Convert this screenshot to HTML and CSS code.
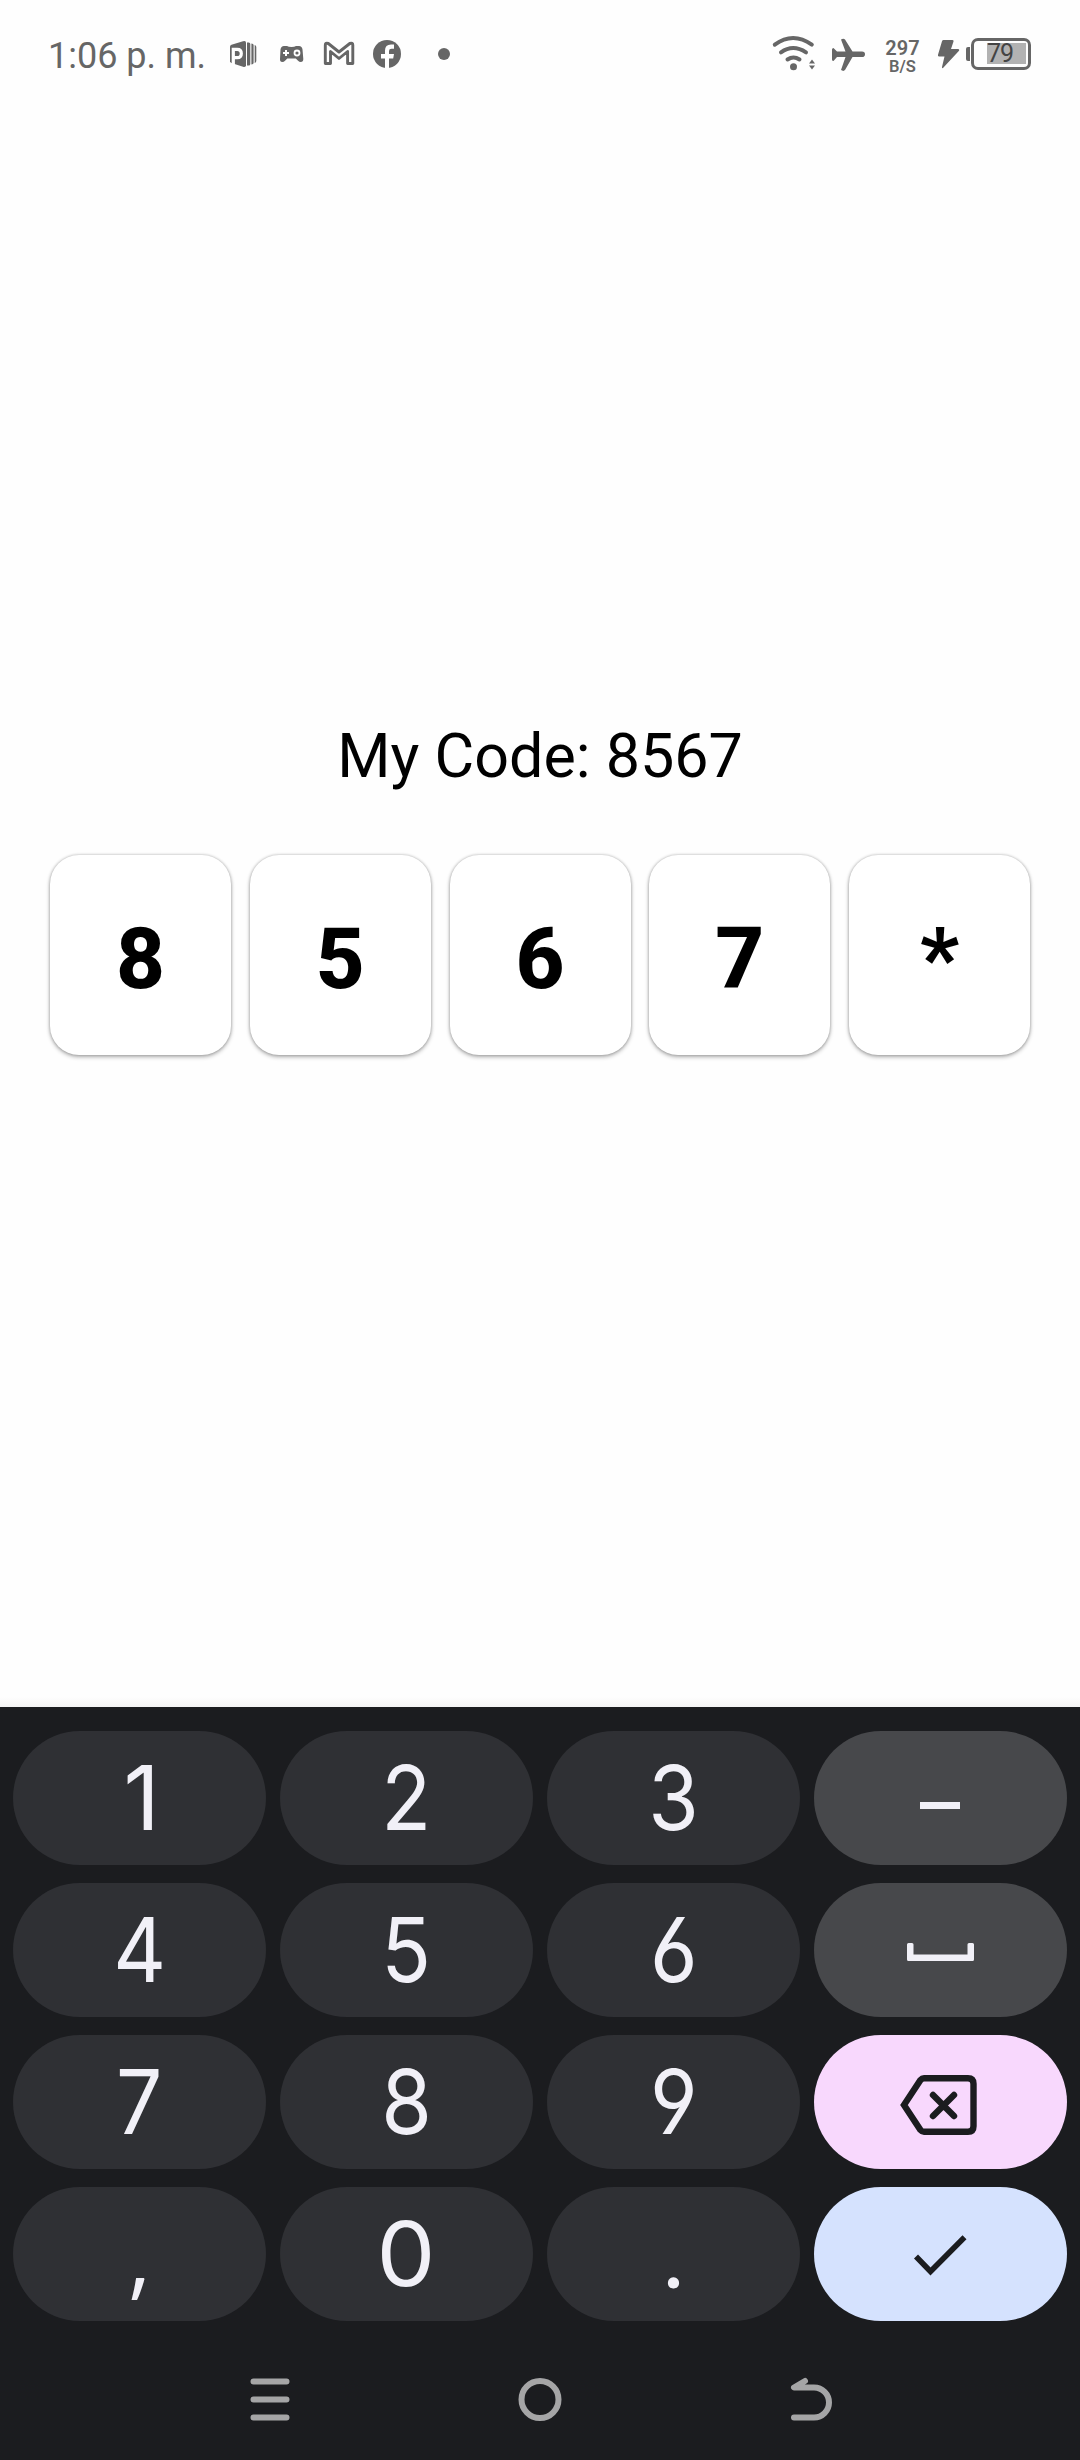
FILE: index.html
```
<!DOCTYPE html>
<html lang="es">
<head>
<meta charset="utf-8">
<title>My Code</title>
<link rel="stylesheet" href="styles.css">
</head>
<body>
<div class="screen">
  <header class="status">
    <div class="status-left">
      <span class="time">1:06 p. m.</span>
      <svg width="28" height="44" viewBox="229 32 28 44"><path d="M230 46.500q0-1.200 1.500-1.700L243 41.200q3-.8 3 1.300v23q0 2-3 1.300L231.500 63q-1.500-.5-1.500-1.700z" fill="#666"/><path d="M233.300 66V49.300h4q4 0 4 4.200t-4 4.200h-4" fill="none" stroke="#fff" stroke-width="3.200"/><path d="M247 42.500h1.800q1.500 0 1.500 1.500v20q0 1.500-1.500 1.500H247zM251.400 43.500q2.200.2 2.200 1.500v18q0 1.300-2.200 1.500zM254.700 45q1.600.3 1.600 2v14q0 1.700-1.600 2z" fill="#666"/></svg>
      <svg width="24" height="44" viewBox="280 32 24 44"><path d="M284 46h3q1.500 1 4.500 1t4.500-1h3q3 0 3.500 3.500l.8 9.500q0 3-2.500 3-1.500 0-3-1.500l-2-2h-8.500l-2 2q-1.500 1.500-3 1.500-2.500 0-2.300-3l.5-9.500q.5-3.500 3.500-3.500z" fill="#666"/><path d="M286 50v6M283 53h6" stroke="#fff" stroke-width="2"/><circle cx="297" cy="53" r="2.500" fill="none" stroke="#fff" stroke-width="1.800"/></svg>
      <svg width="32" height="44" viewBox="323 32 32 44"><path d="M325.300 63.500V45q0-2.500 3-1.500L339 52l10.800-8.500q3-1 3 1.500v18.500h-5.200V51.500L339 58.500l-8.500-7v12z" fill="none" stroke="#666" stroke-width="2.900" stroke-linejoin="round"/></svg>
      <svg width="28" height="44" viewBox="373 32 28 44"><circle cx="387" cy="54" r="14" fill="#666"/><path d="M385 68.300V58.500h-4V54h4v-3.500q0-6 6-6h3v4.200h-2.500q-2.500 0-2.500 2.300v3h5l-.8 4.500H389v9.800z" fill="#fff"/></svg>
      <svg width="12" height="44" viewBox="438 32 12 44"><circle cx="444" cy="54" r="6" fill="#666"/></svg>
    </div>
    <div class="status-right">
      <svg width="43" height="44" viewBox="773 32 43 44"><g fill="none" stroke="#666" stroke-width="4" stroke-linecap="round"><path d="M774.800 44.700q18.200-13.500 37 0M781 52.300q12-8.500 25 0M787.500 59.500q6-4 12 0"/></g><circle cx="793.500" cy="66.700" r="3.500" fill="#666"/><path d="M809 63.500l3-4 3 4zM809 65.500h6l-3 4z" fill="#666"/></svg>
      <svg width="34" height="44" viewBox="832 32 34 44"><path d="M833.500 48 837 51.500h8.500L841 39.500q2.500-1.700 4 0l7.500 12H862q3 0 3 2.800t-3 2.800h-9.500l-7.500 13q-1.500 1.600-4 0l4.500-13H837l-3.500 4q-1.500 0-1.500-1.500v-10q0-1.600 1.500-1.600z" fill="#666"/></svg>
      <div class="speed"><span class="speed-num">297</span><span class="speed-unit">B/S</span></div>
      <svg width="22" height="44" viewBox="937 32 22 44"><path d="M942.500 40h9q1.500 0 1 1.500L950 49h7q2 .3 .8 2L942 68q-1.200.6-1-1l2.500-10.500H938q-1.500-.2-1-1.800l4-13.500q.4-1.200 1.500-1.200z" fill="#666"/></svg>
      <div class="battery"><span class="level">79</span></div>
    </div>
  </header>

  <main class="content">
    <h1 class="title">My Code: 8567</h1>
    <div class="boxes">
      <div class="box">8</div>
      <div class="box">5</div>
      <div class="box">6</div>
      <div class="box">7</div>
      <div class="box">*</div>
    </div>
  </main>

  <section class="keyboard">
    <div class="keys">
      <div class="key"><span class="one">1</span></div>
      <div class="key"><span>2</span></div>
      <div class="key"><span>3</span></div>
      <div class="key alt"><svg width="40" height="7" viewBox="0 0 40 7" class="dash"><path d="M0 0h40v7H0z" fill="#f1f0f7"/></svg></div>
      <div class="key"><span>4</span></div>
      <div class="key"><span>5</span></div>
      <div class="key"><span>6</span></div>
      <div class="key alt"><svg width="67" height="18" viewBox="0 0 67 18" class="space"><path d="M1.500 0h3.500q1.500 0 1.500 1.500v10h54v-10Q60.500 0 62 0h3.500Q67 0 67 1.500v15q0 1.500-1.500 1.500h-64Q0 18 0 16.500v-15Q0 0 1.500 0z" fill="#f1f0f7"/></svg></div>
      <div class="key"><span>7</span></div>
      <div class="key"><span>8</span></div>
      <div class="key"><span>9</span></div>
      <div class="key pink"><svg width="77" height="60" viewBox="0 0 77 60" class="del"><path d="M4 30 20.500 5Q22 3.200 24 3.200h44q5.500 0 5.500 5.500v42.600q0 5.500-5.500 5.500H24q-2 0-3.500-1.800z" fill="none" stroke="#1b1c1f" stroke-width="6.400"/><path d="M33 20 54 41M54 20 33 41" stroke="#1b1c1f" stroke-width="6.400" stroke-linecap="round"/></svg></div>
      <div class="key"><span class="comma">,</span></div>
      <div class="key"><span class="zero">0</span></div>
      <div class="key"><span class="dot">.</span></div>
      <div class="key blue"><svg width="53" height="40" viewBox="0 0 53 40" class="check"><path d="M2 21.500 16.500 36.500 50.500 2.200" fill="none" stroke="#1b1c1f" stroke-width="5.600"/></svg></div>
    </div>
    <nav class="nav">
      <svg width="44" height="44" viewBox="0 0 44 44"><path d="M5.500 4h33M5.500 22h33M5.500 40h33" stroke="#a5a5a6" stroke-width="6" stroke-linecap="round"/></svg>
      <svg width="44" height="44" viewBox="0 0 44 44"><circle cx="22" cy="22" r="18.500" fill="none" stroke="#a5a5a6" stroke-width="6"/></svg>
      <svg width="44" height="44" viewBox="0 0 44 44"><path d="M17 3.500 6 10H26a15 15 0 0 1 0 30H6" fill="none" stroke="#a5a5a6" stroke-width="6" stroke-linecap="round" stroke-linejoin="round"/></svg>
    </nav>
  </section>
</div>
</body>
</html>
```
FILE: styles.css
```
* { box-sizing: border-box; }
body { margin: 0; background: #fefefe; font-family: Roboto, sans-serif; }
svg { display: block; flex: none; overflow: visible; }
.screen { width: 1080px; height: 2460px; display: flex; flex-direction: column; }

.status { display: flex; justify-content: space-between; height: 76px; padding: 32px 49px 0 48px; color: #666; }
.status-left, .status-right { display: flex; align-items: center; }
.time { width: 181px; font-size: 36px; line-height: 44px; padding-top: 3px; white-space: nowrap; }
.status-left svg + svg { margin-left: 23px; }
.status-left svg:nth-of-type(3) { margin-left: 19px; }
.status-left svg:nth-of-type(4) { margin-left: 18px; }
.status-left svg:nth-of-type(5) { margin-left: 37px; }
.status-right svg:nth-of-type(2) { margin-left: 16px; }
.speed { display: flex; flex-direction: column; align-items: center; width: 35px; margin: 4px 18px 0 19px; font-weight: 600; }
.speed-num { font-size: 20px; line-height: 20px; }
.speed-unit { font-size: 16.5px; line-height: 17px; }
.battery { position: relative; width: 60px; height: 32px; margin-left: 11px; border: 3px solid #666; border-radius: 7px; padding: 2px 2px 3px 13px; }
.battery::before { content: ""; position: absolute; left: -8px; top: 6px; width: 4px; height: 14px; border-radius: 2px 0 0 2px; background: #666; }
.level { display: block; height: 21px; background: #b2b2b2; color: #444; font-size: 25px; line-height: 22px; letter-spacing: -1px; }

.content { height: 1631px; padding: 644px 50px 0; background: linear-gradient(#fefefe 1621px, #f4f4f4 1631px); }
.title { margin: 0; font-size: 61px; line-height: 72px; font-weight: 400; text-align: center; color: #000; }
.boxes { display: flex; gap: 18.75px; margin-top: 63px; }
.box { flex: 1; height: 200px; border-radius: 29px; background: #fff; box-shadow: 0 2px 4px rgba(0,0,0,.3), 0 0 3px rgba(0,0,0,.25); font-size: 85px; line-height: 208px; font-weight: 800; text-align: center; color: #000; }

.keyboard { height: 753px; background: #1b1c1f; padding: 24px 13px 0; }
.keys { display: grid; grid-template-columns: repeat(4, 253px); grid-auto-rows: 134px; gap: 18px 14px; }
.key { display: flex; justify-content: center; align-items: center; border-radius: 67px; background: #2f3034; color: #f1f0f7; font-family: Inter, sans-serif; font-size: 89px; line-height: 134px; font-feature-settings: "cv03", "cv04"; }
.key span { display: block; transform: scaleX(.92); }
.key .one { transform: translateX(2px); }
.key .zero { transform: scaleX(1.05); }
.key .comma { font-family: "Open Sans", sans-serif; transform: none; }
.key .dot { font-family: Lato, sans-serif; transform: none; }
.alt { background: #47484b; }
.pink { background: #f8d8fd; }
.blue { background: #d5e2fe; }
.dash { margin: 14px 0 0 -1px; }
.space { margin-top: 3px; }
.del { margin: 6px 0 0 -4px; }
.check { margin-top: 1px; }
.nav { display: flex; justify-content: space-between; padding: 56px 235px 0; }
.nav svg { transform: translateY(.5px); }
```
